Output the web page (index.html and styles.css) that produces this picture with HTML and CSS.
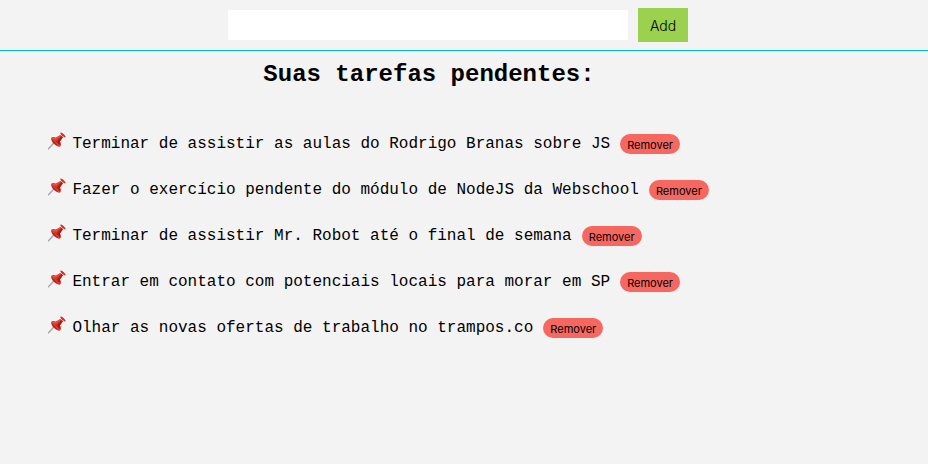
FILE: index.html
```
<!DOCTYPE html>
<html lang="pt-BR">
<head>
<meta charset="utf-8">
<title>Tarefas</title>
<link rel="stylesheet" href="styles.css">
</head>
<body>
<svg class="defs" aria-hidden="true">
  <symbol id="pin" viewBox="0 0 18 18">
    <path d="M.5 16.8 7 9.8" stroke="#a3a8ad" stroke-width="1.4" stroke-linecap="round"/>
    <path d="M3.2 5.8C4.4 4.6 6.5 4.8 7.8 5.6L12.4 2.9 14.9 5.2 11.9 9.5C13.4 11 13.2 13.6 12 14.8Z" fill="#d93425"/>
    <path d="M3.2 5.8 12 14.8C9.8 14.8 7.2 13.2 5.6 11.6 4 10 2.8 7.5 3.2 5.8Z" fill="#bd2419"/>
    <path d="M8.4 9.8 13.7 4.1 14.9 5.2 11.9 9.5 12.2 13.2Z" fill="#a91d16"/>
    <path d="M5.2 6.4 8 7.1 12 3.8" stroke="#f0634d" stroke-width=".9" fill="none"/>
    <path d="M12.4.7C13.6-.2 18.4 4.3 17.4 5.3 16.1 6.1 11.5 1.8 12.4.7Z" fill="#cf2c22"/>
    <path d="M13.3 1.1C14.7 1.5 16.6 3.2 17 4.6" stroke="#e34538" stroke-width=".6" fill="none"/>
  </symbol>
</svg>
<form class="bar">
  <input class="field" type="text" aria-label="Tarefa">
  <button class="add" type="button">Add</button>
</form>
<main class="tasks">
  <h1 class="title">Suas tarefas pendentes:</h1>
  <ul class="list">
    <li class="task"><svg class="pin"><use href="#pin"/></svg><span>Terminar de assistir as aulas do Rodrigo Branas sobre JS</span><button class="remove">Remover</button></li>
    <li class="task"><svg class="pin"><use href="#pin"/></svg><span>Fazer o exercício pendente do módulo de NodeJS da Webschool</span><button class="remove">Remover</button></li>
    <li class="task"><svg class="pin"><use href="#pin"/></svg><span>Terminar de assistir Mr. Robot até o final de semana</span><button class="remove">Remover</button></li>
    <li class="task"><svg class="pin"><use href="#pin"/></svg><span>Entrar em contato com potenciais locais para morar em SP</span><button class="remove">Remover</button></li>
    <li class="task"><svg class="pin"><use href="#pin"/></svg><span>Olhar as novas ofertas de trabalho no trampos.co</span><button class="remove">Remover</button></li>
  </ul>
</main>
</body>
</html>
```
FILE: styles.css
```
* { box-sizing: border-box; }
body {
  margin: 0;
  background: #f3f3f3;
  color: #000;
  font: 16px/18px "Liberation Mono", "Courier New", monospace;
}
.defs { display: none; }
.bar {
  display: flex;
  align-items: center;
  gap: 10px;
  height: 51px;
  padding: 0 0 0 228px;
  border-bottom: 1px solid #00bccb;
}
.field {
  width: 400px;
  height: 30px;
  border: 0;
  padding: 0 8px;
  background: #fff;
}
.add {
  width: 50px;
  height: 34px;
  border: 0;
  padding: 2px 0 0;
  background: #9ad14f;
  color: #000;
  font: 300 14px/18px Inter, sans-serif;
}
.title {
  margin: 0;
  padding: 10px 70px 0 0;
  text-align: center;
  font-size: 24px;
  line-height: 28px;
  font-weight: bold;
}
.list {
  list-style: none;
  margin: 32px 0 0;
  padding: 0 0 0 48px;
}
.task {
  display: flex;
  align-items: center;
  height: 46px;
  white-space: pre;
}
.pin {
  width: 18px;
  height: 18px;
  margin: -7px 6.4px 0 0;
}
.remove {
  width: 60px;
  height: 20px;
  margin-left: 10px;
  border: 0;
  border-radius: 10px;
  padding: 2px 0 0;
  background: #f5675f;
  color: #000;
  font: 11px/16px Inter, sans-serif;
}
```
